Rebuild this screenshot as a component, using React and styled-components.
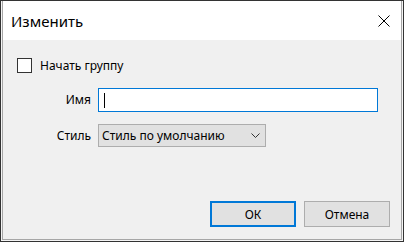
import React from "react";
import styled, { createGlobalStyle } from "styled-components";

const Global = createGlobalStyle`
  html, body { margin: 0; padding: 0; background: #ffffff; }
  body { font-family: "Noto Sans", "Open Sans", sans-serif; }
`;

const Window = styled.div`
  box-sizing: border-box;
  width: 404px;
  height: 242px;
  border: 1px solid #333333;
  padding: 0 1px 1px 1px;
  background: #f4f4f4;
  display: flex;
`;

const Inner = styled.div`
  flex: 1;
  display: flex;
  flex-direction: column;
  border: 1px solid #a6a6a6;
  border-top: none;
`;

const TitleBar = styled.div`
  height: 39px;
  flex: 0 0 39px;
  background: #ffffff;
  display: flex;
  align-items: center;
  justify-content: space-between;
  padding: 1px 11px 0 8px;
  box-sizing: border-box;
`;

const Title = styled.span`
  font-size: 15px;
  color: #000000;
  letter-spacing: 0;
`;

const Close = styled.svg`
  width: 12px;
  height: 12px;
  display: block;
`;

const Body = styled.div`
  flex: 1;
  display: flex;
  flex-direction: column;
  background: #f0f0f0;
  padding: 18px 11px 12px 14px;
  font-size: 12px;
  color: #000000;
`;

const CheckRow = styled.label`
  display: flex;
  align-items: center;
  gap: 8px;
  height: 15px;
`;

const Box = styled.span`
  box-sizing: border-box;
  width: 15px;
  height: 15px;
  border: 1px solid #333333;
  background: #ffffff;
`;

const Form = styled.div`
  display: grid;
  grid-template-columns: 74px auto;
  column-gap: 7px;
  row-gap: 12px;
  margin-top: 15px;
  align-items: center;
  justify-items: start;
`;

const Label = styled.span`
  justify-self: end;
  line-height: 16px;
`;

const TextField = styled.div`
  box-sizing: border-box;
  width: 280px;
  height: 24px;
  border: 1px solid #0078d7;
  background: #ffffff;
  display: flex;
  align-items: center;
  padding-left: 5px;
`;

const Caret = styled.span`
  width: 1px;
  height: 15px;
  background: #000000;
`;

const Combo = styled.div`
  box-sizing: border-box;
  width: 168px;
  height: 23px;
  border: 1px solid #adadad;
  background: #e1e1e1;
  display: flex;
  align-items: center;
  justify-content: space-between;
  padding: 0 5px 0 3px;
`;

const Chevron = styled.svg`
  width: 9px;
  height: 5px;
  display: block;
`;

const Buttons = styled.div`
  margin-top: auto;
  display: flex;
  justify-content: flex-end;
  gap: 8px;
`;

const Button = styled.div`
  box-sizing: border-box;
  width: 86px;
  height: 26px;
  background: #e1e1e1;
  border: ${(p) => (p.$default ? "2px solid #0078d7" : "1px solid #adadad")};
  display: flex;
  align-items: center;
  justify-content: center;
  font-size: 12px;
`;

export default function App() {
  return (
    <>
      <Global />
      <Window>
        <Inner>
          <TitleBar>
            <Title>Изменить</Title>
            <Close viewBox="0 0 12 12">
              <path d="M0.5 0.5 L11.5 11.5 M11.5 0.5 L0.5 11.5" stroke="#000" strokeWidth="1" fill="none" />
            </Close>
          </TitleBar>
          <Body>
            <CheckRow>
              <Box />
              <span>Начать группу</span>
            </CheckRow>
            <Form>
              <Label>Имя</Label>
              <TextField>
                <Caret />
              </TextField>
              <Label>Стиль</Label>
              <Combo>
                <span>Стиль по умолчанию</span>
                <Chevron viewBox="0 0 9 5">
                  <polyline points="0.5,0.5 4.5,4.5 8.5,0.5" stroke="#333" strokeWidth="1" fill="none" />
                </Chevron>
              </Combo>
            </Form>
            <Buttons>
              <Button $default>ОК</Button>
              <Button>Отмена</Button>
            </Buttons>
          </Body>
        </Inner>
      </Window>
    </>
  );
}
